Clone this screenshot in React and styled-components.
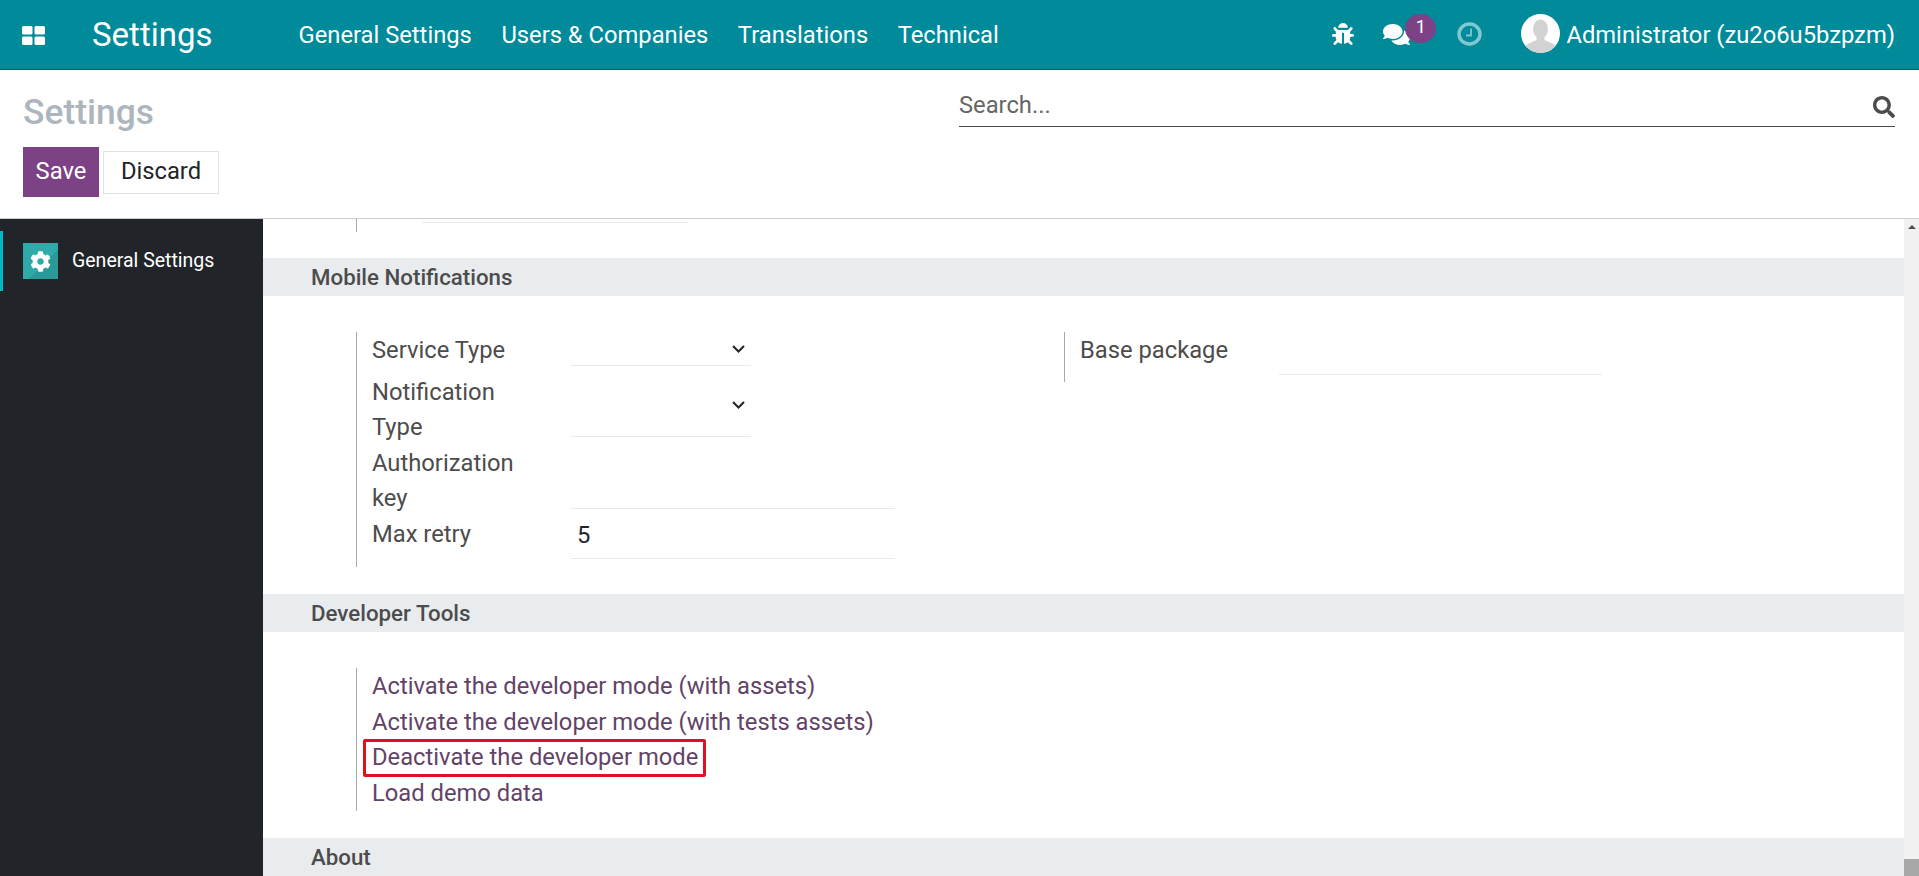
import React from "react";
import styled, { createGlobalStyle } from "styled-components";
import { FaBug, FaComments, FaSearch, FaCog } from "react-icons/fa";

const GlobalStyle = createGlobalStyle`
  html, body {
    margin: 0;
    padding: 0;
    height: 100%;
    overflow: hidden;
  }
  body {
    font-family: Roboto, "Liberation Sans", sans-serif;
    font-size: 23.75px;
    line-height: 35.6px;
    color: #4c4c4c;
    background: #fff;
  }
`;

const Page = styled.div`
  display: flex;
  flex-direction: column;
  height: 876px;
  overflow: hidden;
`;

const NavBar = styled.header`
  display: flex;
  align-items: center;
  flex: none;
  height: 70px;
  box-sizing: border-box;
  padding: 1px 24px 0 22px;
  background: #008a9a;
  border-bottom: 1px solid #0b5f6a;
  color: #fff;
`;

const AppsButton = styled.svg`
  width: 23px;
  height: 19px;
  flex: none;
  margin-right: 47px;
`;

const BrandTitle = styled.div`
  font-size: 33px;
  margin-right: 86px;
`;

const NavMenu = styled.nav`
  display: flex;
  gap: 29.5px;
`;

const NavItem = styled.span`
  padding-top: 2px;
  white-space: nowrap;
`;

const Systray = styled.div`
  display: flex;
  align-items: center;
  margin-left: auto;
`;

const TrayIcon = styled.span`
  position: relative;
  display: flex;
  align-items: center;
  margin-right: ${(props) => props.$gap}px;
  margin-bottom: 2px;
  font-size: ${(props) => props.$size}px;
`;

const Badge = styled.span`
  position: absolute;
  left: 22px;
  top: -7px;
  width: 31px;
  height: 29px;
  border-radius: 50%;
  background: #7c4285;
  font-size: 18px;
  line-height: 25px;
  text-align: center;
`;

const Avatar = styled.svg`
  width: 39px;
  height: 39px;
  flex: none;
  margin-right: 6px;
  margin-bottom: 3px;
`;

const ControlPanel = styled.section`
  display: grid;
  grid-template-columns: 1fr 936px;
  flex: none;
  height: 149px;
  box-sizing: border-box;
  padding: 0 24px 0 23px;
  border-bottom: 1px solid #ccc;
  background: #fff;
`;

const PanelLeft = styled.div`
  display: flex;
  flex-direction: column;
`;

const Breadcrumb = styled.h1`
  margin: 20px 0 12px;
  font-size: 35.4px;
  line-height: 45px;
  font-weight: 500;
  color: #adb5bd;
`;

const ButtonRow = styled.div`
  display: flex;
  align-items: center;
  gap: 4px;
`;

const SaveButton = styled.button`
  width: 76px;
  height: 50px;
  padding: 0;
  border: none;
  background: #7c4285;
  color: #fff;
  font: inherit;
`;

const DiscardButton = styled.button`
  width: 116px;
  height: 43px;
  padding: 0;
  border: 1px solid #dee2e6;
  background: #fff;
  color: #212529;
  font: inherit;
`;

const SearchBar = styled.div`
  display: flex;
  align-items: center;
  justify-content: space-between;
  height: 39px;
  margin-top: 17px;
  border-bottom: 1.5px solid #4c4c4c;
  color: #666;
`;

const SearchHint = styled.span`
  padding-bottom: 2px;
`;

const Body = styled.div`
  display: flex;
  flex: 1;
  min-height: 0;
`;

const Sidebar = styled.aside`
  flex: none;
  width: 263px;
  padding-top: 12px;
  box-sizing: border-box;
  background: #212529;
`;

const SideItem = styled.div`
  display: flex;
  align-items: center;
  height: 60px;
  padding-left: 20px;
  border-left: 3px solid #00b7c7;
  color: #fff;
  font-size: 19.5px;
`;

const SideIcon = styled.span`
  display: flex;
  align-items: center;
  justify-content: center;
  width: 35px;
  height: 36px;
  margin-right: 14px;
  color: #fff;
  font-size: 21px;
  background: linear-gradient(135deg, #2eaaa8 0 58%, #2a9a98 58% 100%);
`;

const Content = styled.main`
  flex: 1;
  min-width: 0;
  overflow: hidden;
`;

const StubRow = styled.div`
  height: 39px;
  padding-left: 93px;
`;

const Stub = styled.div`
  height: 13px;
  padding-left: 65px;
  border-left: 1px solid #aaa;
`;

const StubField = styled.div`
  width: 266px;
  height: 3px;
  border-bottom: 1px solid #e9ecef;
`;

const SectionHeader = styled.h2`
  margin: 0;
  height: 38px;
  padding-left: 48px;
  background: #e9ecef;
  font-size: 22.3px;
  line-height: 38px;
  font-weight: 500;
  color: #4c4c4c;
`;

const SectionBody = styled.div`
  display: grid;
  grid-template-columns: 708px 1fr;
  align-items: start;
  padding: 36px 0 27px 93px;
`;

const SettingBox = styled.div`
  padding: ${(props) => props.$top || 0}px 0 0 15px;
  border-left: 1px solid #aaa;
`;

const FormRow = styled.div`
  display: grid;
  grid-template-columns: ${(props) => props.$label}px ${(props) => props.$field}px;
  align-items: start;
  height: ${(props) => props.$height}px;
`;

const FieldLabel = styled.label`
  display: block;
  width: 150px;
  padding-top: 1px;
`;

const SelectField = styled.div`
  display: flex;
  align-items: center;
  justify-content: flex-end;
  box-sizing: border-box;
  width: 180px;
  height: ${(props) => props.$height}px;
  padding-right: 5px;
  border-bottom: 1px solid #e9ecef;
  color: #212529;
`;

const TextField = styled.input`
  display: block;
  box-sizing: border-box;
  width: 100%;
  height: ${(props) => props.$height}px;
  padding: 0 0 3px 6px;
  border: none;
  border-bottom: 1px solid #e9ecef;
  outline: none;
  background: transparent;
  color: #212529;
  font: inherit;
`;

const Chevron = styled.svg`
  width: 15px;
  height: 10px;
`;

const DevLink = styled.a`
  position: relative;
  display: block;
  width: fit-content;
  color: #624367;
  text-decoration: none;

  ${(props) =>
    props.$marked &&
    `&::after {
      content: "";
      position: absolute;
      left: -9px;
      right: -8px;
      top: -1px;
      bottom: -1px;
      border: 3px solid #e2101a;
      border-radius: 2px;
    }`}
`;

const ScrollTrack = styled.div`
  display: flex;
  flex-direction: column;
  justify-content: space-between;
  align-items: center;
  flex: none;
  width: 15px;
  background: #f1f1f1;
`;

const ScrollArrow = styled.span`
  width: 0;
  height: 0;
  margin-top: 6px;
  border-left: 4px solid transparent;
  border-right: 4px solid transparent;
  border-bottom: 4px solid #505050;
`;

const ScrollThumb = styled.span`
  width: 100%;
  height: 17px;
  background: #a8a8a8;
`;

const ChevronIcon = () => (
  <Chevron viewBox="0 0 15 10" fill="none" stroke="currentColor" strokeWidth="2">
    <path d="M2 2l5.5 5.5L13 2" />
  </Chevron>
);

const App = () => (
  <Page>
    <GlobalStyle />
    <NavBar>
      <AppsButton viewBox="0 0 23 19" fill="#fff">
        <rect x="0" y="0" width="10.5" height="8.5" rx="1.5" />
        <rect x="12.5" y="0" width="10.5" height="8.5" rx="1.5" />
        <rect x="0" y="10.5" width="10.5" height="8.5" rx="1.5" />
        <rect x="12.5" y="10.5" width="10.5" height="8.5" rx="1.5" />
      </AppsButton>
      <BrandTitle>Settings</BrandTitle>
      <NavMenu>
        <NavItem>General Settings</NavItem>
        <NavItem>Users &amp; Companies</NavItem>
        <NavItem>Translations</NavItem>
        <NavItem>Technical</NavItem>
      </NavMenu>
      <Systray>
        <TrayIcon $gap={29} $size={22}>
          <FaBug />
        </TrayIcon>
        <TrayIcon $gap={47} $size={27}>
          <FaComments />
          <Badge>1</Badge>
        </TrayIcon>
        <TrayIcon $gap={39} $size={25}>
          <svg width="25" height="24" viewBox="0 0 25 24" fill="none" stroke="#7fc8d0">
            <ellipse cx="12.5" cy="12" rx="10.5" ry="10" strokeWidth="3.5" />
            <path d="M14 6.5v7H9" strokeWidth="1.8" />
          </svg>
        </TrayIcon>
        <Avatar viewBox="0 0 39 39">
          <defs>
            <clipPath id="avatarClip">
              <circle cx="19.5" cy="19.5" r="19.5" />
            </clipPath>
          </defs>
          <circle cx="19.5" cy="19.5" r="19.5" fill="#fff" />
          <g clipPath="url(#avatarClip)" fill="#d2d2d2">
            <ellipse cx="19.5" cy="15" rx="7.5" ry="9.5" />
            <path d="M15.5 22h8v4l9 4c2 1 3 4 3 9H3.5c0-5 1-8 3-9l9-4z" />
          </g>
        </Avatar>
        <NavItem>Administrator (zu2o6u5bzpzm)</NavItem>
      </Systray>
    </NavBar>

    <ControlPanel>
      <PanelLeft>
        <Breadcrumb>Settings</Breadcrumb>
        <ButtonRow>
          <SaveButton>Save</SaveButton>
          <DiscardButton>Discard</DiscardButton>
        </ButtonRow>
      </PanelLeft>
      <SearchBar>
        <SearchHint>Search...</SearchHint>
        <FaSearch size={22} color="#4c4c4c" />
      </SearchBar>
    </ControlPanel>

    <Body>
      <Sidebar>
        <SideItem>
          <SideIcon>
            <FaCog />
          </SideIcon>
          General Settings
        </SideItem>
      </Sidebar>

      <Content>
        <StubRow>
          <Stub>
            <StubField />
          </Stub>
        </StubRow>

        <SectionHeader>Mobile Notifications</SectionHeader>
        <SectionBody>
          <SettingBox>
            <FormRow $label={199} $field={324} $height={41.5}>
              <FieldLabel>Service Type</FieldLabel>
              <SelectField $height={34}>
                <ChevronIcon />
              </SelectField>
            </FormRow>
            <FormRow $label={199} $field={324} $height={71}>
              <FieldLabel>Notification Type</FieldLabel>
              <SelectField $height={63}>
                <ChevronIcon />
              </SelectField>
            </FormRow>
            <FormRow $label={199} $field={324} $height={71}>
              <FieldLabel>Authorization key</FieldLabel>
              <TextField $height={64} readOnly />
            </FormRow>
            <FormRow $label={199} $field={324} $height={51.5}>
              <FieldLabel>Max retry</FieldLabel>
              <TextField $height={43} value="5" readOnly />
            </FormRow>
          </SettingBox>
          <SettingBox>
            <FormRow $label={199} $field={323} $height={50}>
              <FieldLabel>Base package</FieldLabel>
              <TextField $height={43} readOnly />
            </FormRow>
          </SettingBox>
        </SectionBody>

        <SectionHeader>Developer Tools</SectionHeader>
        <SectionBody>
          <SettingBox $top={1}>
            <DevLink>Activate the developer mode (with assets)</DevLink>
            <DevLink>Activate the developer mode (with tests assets)</DevLink>
            <DevLink $marked>Deactivate the developer mode</DevLink>
            <DevLink>Load demo data</DevLink>
          </SettingBox>
        </SectionBody>

        <SectionHeader>About</SectionHeader>
      </Content>

      <ScrollTrack>
        <ScrollArrow />
        <ScrollThumb />
      </ScrollTrack>
    </Body>
  </Page>
);

export default App;
